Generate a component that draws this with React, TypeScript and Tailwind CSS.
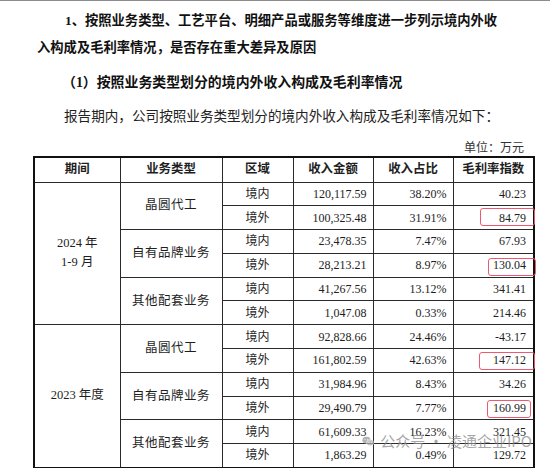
const serif = "font-['Liberation_Serif','Noto_Sans_CJK_SC',serif]";

type Row = {
  region: string;
  amount: string;
  share: string;
  index: string;
  mark?: { left: number; top: number; w: number; h: number };
};

type Group = { type: string; rows: Row[] };
type Period = { label: string[]; groups: Group[] };

const periods: Period[] = [
  {
    label: ["2024 年", "1-9 月"],
    groups: [
      {
        type: "晶圆代工",
        rows: [
          { region: "境内", amount: "120,117.59", share: "38.20%", index: "40.23" },
          {
            region: "境外",
            amount: "100,325.48",
            share: "31.91%",
            index: "84.79",
            mark: { left: 26, top: 2, w: 55, h: 18 },
          },
        ],
      },
      {
        type: "自有品牌业务",
        rows: [
          { region: "境内", amount: "23,478.35", share: "7.47%", index: "67.93" },
          {
            region: "境外",
            amount: "28,213.21",
            share: "8.97%",
            index: "130.04",
            mark: { left: 34, top: 4, w: 48, h: 18 },
          },
        ],
      },
      {
        type: "其他配套业务",
        rows: [
          { region: "境内", amount: "41,267.56", share: "13.12%", index: "341.41" },
          { region: "境外", amount: "1,047.08", share: "0.33%", index: "214.46" },
        ],
      },
    ],
  },
  {
    label: ["2023 年度"],
    groups: [
      {
        type: "晶圆代工",
        rows: [
          { region: "境内", amount: "92,828.66", share: "24.46%", index: "-43.17" },
          {
            region: "境外",
            amount: "161,802.59",
            share: "42.63%",
            index: "147.12",
            mark: { left: 25, top: 3, w: 56, h: 18 },
          },
        ],
      },
      {
        type: "自有品牌业务",
        rows: [
          { region: "境内", amount: "31,984.96", share: "8.43%", index: "34.26" },
          {
            region: "境外",
            amount: "29,490.79",
            share: "7.77%",
            index: "160.99",
            mark: { left: 33, top: 3, w: 44, h: 18 },
          },
        ],
      },
      {
        type: "其他配套业务",
        rows: [
          { region: "境内", amount: "61,609.33", share: "16.23%", index: "321.45" },
          { region: "境外", amount: "1,863.29", share: "0.49%", index: "129.72" },
        ],
      },
    ],
  },
];

const cell = "border border-[#2a2a2a] p-0";

function WeChatIcon() {
  return (
    <svg width="15" height="13" viewBox="0 0 30 26">
      <ellipse cx="11" cy="10" rx="10" ry="8.5" fill="#9a9a9a" />
      <ellipse cx="20" cy="16" rx="9" ry="7.5" fill="#b0b0b0" stroke="#fff" strokeWidth="1.2" />
      <circle cx="7.5" cy="8" r="1.3" fill="#fff" />
      <circle cx="14" cy="8" r="1.3" fill="#fff" />
      <circle cx="17" cy="15" r="1.1" fill="#fff" />
      <circle cx="23" cy="15" r="1.1" fill="#fff" />
    </svg>
  );
}

export default function App() {
  return (
    <div className={`relative w-[550px] h-[468px] overflow-hidden bg-white ${serif}`}>
      <div className="h-px bg-[#8c8c8c]" />

      {/* Heading */}
      <div className="pt-[5.5px] pl-[37px] text-[13.3px] leading-[27px] font-bold text-[#111]">
        <div className="pl-[28px]">1、按照业务类型、工艺平台、明细产品或服务等维度进一步列示境内外收</div>
        <div>入构成及毛利率情况，是否存在重大差异及原因</div>
      </div>

      <div className="mt-[8px] pl-[62px] text-[13.9px] leading-[27px] font-bold text-[#111]">
        （1）按照业务类型划分的境内外收入构成及毛利率情况
      </div>

      <div className="mt-[7px] pl-[64px] text-[13.6px] leading-[27px] text-[#222]">
        报告期内，公司按照业务类型划分的境内外收入构成及毛利率情况如下：
      </div>

      <div className="mt-[10.5px] pr-[26px] text-right text-[12px] leading-[16px] text-[#333]">
        单位：万元
      </div>

      {/* Table */}
      <table className="ml-[33px] w-[500px] table-fixed border-collapse border-2 border-[#111] text-[12px] text-[#1e1e1e]">
        <colgroup>
          <col className="w-[86px]" />
          <col className="w-[102px]" />
          <col className="w-[71px]" />
          <col className="w-[80px]" />
          <col className="w-[80px]" />
          <col className="w-[81px]" />
        </colgroup>
        <thead>
          <tr className="h-[25px] font-bold text-[12.4px]">
            <th className={`${cell} font-bold`}>期间</th>
            <th className={`${cell} font-bold`}>业务类型</th>
            <th className={`${cell} font-bold`}>区域</th>
            <th className={`${cell} font-bold`}>收入金额</th>
            <th className={`${cell} font-bold`}>收入占比</th>
            <th className={`${cell} font-bold`}>毛利率指数</th>
          </tr>
        </thead>
        <tbody>
          {periods.map((p, pi) =>
            p.groups.map((g, gi) =>
              g.rows.map((r, ri) => (
                <tr key={`${pi}-${gi}-${ri}`} className="h-[23.8px]">
                  {gi === 0 && ri === 0 && (
                    <td rowSpan={6} className={`${cell} text-center text-[12.5px] leading-[19px]`}>
                      {p.label.map((l) => (
                        <div key={l}>{l}</div>
                      ))}
                    </td>
                  )}
                  {ri === 0 && (
                    <td rowSpan={2} className={`${cell} text-center text-[12.5px] tracking-[0.5px]`}>
                      {g.type}
                    </td>
                  )}
                  <td className={`${cell} text-center`}>{r.region}</td>
                  <td className={`${cell} text-right pr-[6px]`}>{r.amount}</td>
                  <td className={`${cell} text-right pr-[6px]`}>{r.share}</td>
                  <td className={`${cell} relative text-right pr-[7px]`}>
                    {r.index}
                    {r.mark && (
                      <span
                        className="absolute rounded-[3px] border-solid border-[length:1.5px] border-[color:#ec5a72]"
                        style={{
                          left: r.mark.left,
                          top: r.mark.top,
                          width: r.mark.w,
                          height: r.mark.h,
                        }}
                      />
                    )}
                  </td>
                </tr>
              ))
            )
          )}
        </tbody>
      </table>

      {/* Watermark */}
      <div className="absolute left-[362px] top-[432px] w-[170px] h-[18px] overflow-hidden flex items-center gap-[6px] opacity-75 pointer-events-none">
        <WeChatIcon />
        <span className="text-[15px] leading-[18px] text-[#8a8a8a] font-['Noto_Sans_CJK_SC',sans-serif] whitespace-nowrap">
          公众号 · 凌通企业IPO
        </span>
      </div>
    </div>
  );
}
